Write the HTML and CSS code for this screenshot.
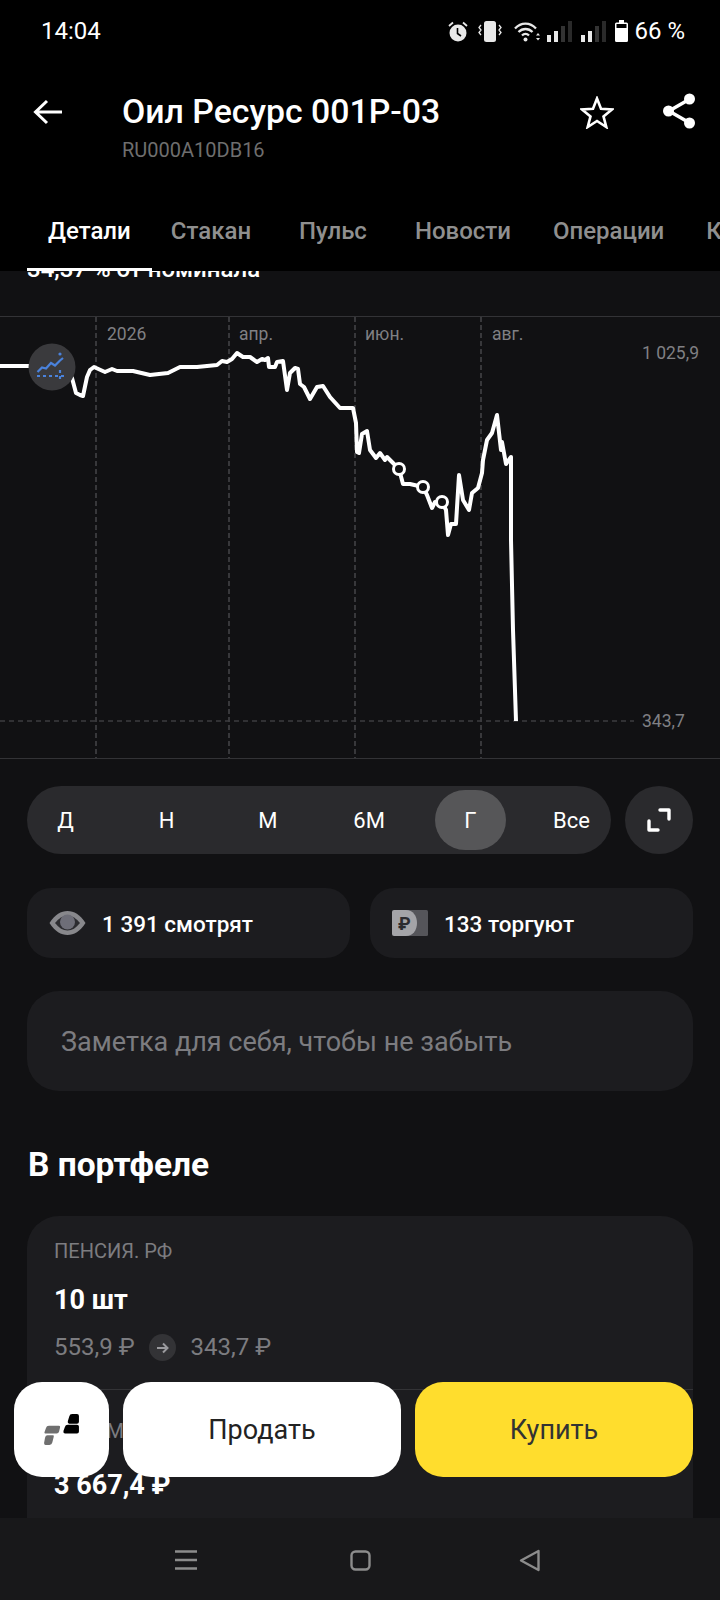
FILE: index.html
```html
<!DOCTYPE html>
<html lang="ru">
<head>
    <meta charset="UTF-8">
    <meta name="viewport" content="width=device-width, initial-scale=1.0">
    <title>Оил Ресурс 001Р-03</title>
    <link rel="stylesheet" href="styles.css">
</head>
<body>
    <div class="screen">
        <header class="top">
            <div class="status-bar">
                <span class="status-time">14:04</span>
                <div class="status-icons">
                    <svg class="ic-alarm" width="20" height="21" viewBox="0 0 20 21"><path d="M1 5 5 1.500M19 5l-4-3.500" stroke="#e8e8e8" stroke-width="1.800"/><circle cx="10" cy="12" r="8.500" fill="#e8e8e8"/><path d="M9.500 7v5.500l3.500 2.500" stroke="#000" stroke-width="1.600" fill="none"/></svg>
                    <svg class="ic-vibrate" width="24" height="21" viewBox="0 0 24 21"><rect x="6" y="0" width="12" height="21" rx="2.500" fill="#e8e8e8"/><path d="M3 4 1 6.500 3 9 1 11.500 3 14M21 4l2 2.500L21 9l2 2.500L21 14" stroke="#e8e8e8" stroke-width="1.300" fill="none"/></svg>
                    <svg class="ic-wifi" width="26" height="21" viewBox="0 0 26 21"><path d="M1 7.500C7 1 16 1 22 7.500M4.500 11c4-4 10-4 14 0M8 14.500c2-2 5-2 7 0" stroke="#e8e8e8" stroke-width="2.300" fill="none"/><circle cx="11.500" cy="18.500" r="2" fill="#e8e8e8"/><path d="M22 14.500h4l-2-2.500zM22 17h4l-2 2.500z" fill="#e8e8e8"/></svg>
                    <svg class="ic-signal" width="25" height="21" viewBox="0 0 25 21"><rect x="0" y="14" width="4" height="7" fill="#e8e8e8"/><rect x="7" y="10" width="4" height="11" fill="#e8e8e8"/><rect x="14" y="5" width="4" height="16" fill="#333"/><rect x="21" y="0" width="4" height="21" fill="#2a2a2a"/></svg>
                    <svg class="ic-signal" width="25" height="21" viewBox="0 0 25 21"><rect x="0" y="14" width="4" height="7" fill="#e8e8e8"/><rect x="7" y="10" width="4" height="11" fill="#e8e8e8"/><rect x="14" y="5" width="4" height="16" fill="#333"/><rect x="21" y="0" width="4" height="21" fill="#2a2a2a"/></svg>
                    <svg class="ic-battery" width="13" height="22" viewBox="0 0 13 22"><path d="M4 0h5v2.500h2.500a1.500 1.500 0 0 1 1.500 1.500v16.500a1.500 1.500 0 0 1-1.500 1.500h-10A1.500 1.500 0 0 1 0 20.500V4a1.500 1.500 0 0 1 1.500-1.500H4z" fill="#fff"/><rect x="1.500" y="4" width="10" height="4" fill="#000"/></svg>
                    <span class="status-pct">66 %</span>
                </div>
            </div>
            <div class="title-row">
                <svg class="back-ic" width="30" height="26" viewBox="0 0 30 26"><path d="M29 13H3M14 2 2.500 13 14 24" stroke="#fff" stroke-width="3" fill="none"/></svg>
                <div class="title-text">
                    <h1>Оил Ресурс 001Р-03</h1>
                    <div class="isin">RU000A10DB16</div>
                </div>
                <svg class="star-ic" width="34" height="33" viewBox="0 0 34 33"><path d="M17 2.500 21 12.800 32 13.400 23.500 20.400 26.300 31 17 25 7.700 31 10.500 20.400 2 13.400 13 12.800Z" stroke="#fff" stroke-width="2.600" fill="none" stroke-linejoin="miter"/></svg>
                <svg class="share-ic" width="34" height="36" viewBox="0 0 34 36"><path d="M27 6.500 7 18l20 11.500" stroke="#fff" stroke-width="3.500" fill="none"/><circle cx="27.500" cy="6" r="5.500" fill="#fff"/><circle cx="6.500" cy="18" r="5.500" fill="#fff"/><circle cx="27.500" cy="30" r="5.500" fill="#fff"/></svg>
            </div>
            <nav class="tabs">
                <a class="tab tab-active">Детали</a>
                <a class="tab">Стакан</a>
                <a class="tab">Пульс</a>
                <a class="tab">Новости</a>
                <a class="tab">Операции</a>
                <a class="tab">Купоны</a>
            </nav>
        </header>

        <main class="content">
            <div class="nominal">34,37 % от номинала</div>

            <svg class="chart" width="720" height="444" viewBox="0 316 720 444">
                <path class="grid" d="M0 316.500H720M0 758.500H720"/>
                <path class="grid-dash" d="M96 317V758M229 317V758M355 317V758M481 317V758"/>
                <path class="level-dash" d="M0 721H634"/>
                <text class="axis" x="107" y="340">2026</text>
                <text class="axis" x="239" y="340">апр.</text>
                <text class="axis" x="365" y="340">июн.</text>
                <text class="axis" x="492" y="340">авг.</text>
                <text class="axis" x="642" y="359">1 025,9</text>
                <text class="axis" x="642" y="727">343,7</text>
                <path class="price" d="M0 366 27 366 40 366 60 366 72 378 76 393 80 395 83 396 87 377 90 370 94 367 105 372 112 369 117 371 133 371 150 375 168 373 180 367 197 367 217 365 222 361 227 362 232 359 237 353 243 357 250 357 257 362 262 359 265 360 268 358 269 367 275 367 277 362 283 361 287 390 290 373 295 368 298 369 300 384 304 387 310 399 317 387 323 386 330 397 340 408 353 408 356 423 357 452 359 453 362 434 367 431 370 450 376 458 380 453 385 460 387 457 393 463 399 469 403 484 410 484 423 487 427 495 432 508 435 502 442 502 446 510 448 535 451 524 456 524 459 475 463 500 469 510 472 493 478 488 482 473 483 460 487 440 492 433 497 415 501 450 502 442 506 464 511 457 511 540 513 630 516 721"/>
                <circle class="marker" cx="399" cy="469" r="5.500"/>
                <circle class="marker" cx="423" cy="487" r="5.500"/>
                <circle class="marker" cx="442" cy="502" r="5.500"/>
                <circle cx="52" cy="367" r="23.500" fill="#3a3a3d"/>
                <path d="M37.500 372 42 367.500 46 368.500 51 363 55 365.500 60 360.500 63 358" stroke="#4a82dc" stroke-width="2.200" fill="none"/>
                <circle cx="60" cy="354" r="1.600" fill="#4a82dc"/>
                <path d="M37 376H66M60 370V382" stroke="#4a82dc" stroke-width="2.200" stroke-dasharray="3 3" fill="none"/>
            </svg>

            <div class="controls">
                <div class="periods">
                    <span class="period">Д</span>
                    <span class="period">Н</span>
                    <span class="period">М</span>
                    <span class="period">6М</span>
                    <span class="period period-active">Г</span>
                    <span class="period">Все</span>
                </div>
                <div class="expand">
                    <svg width="24" height="24" viewBox="0 0 24 24"><path d="M13 2h9v9M2 13v9h9" stroke="#fff" stroke-width="3.400" fill="none" stroke-linecap="round" stroke-linejoin="round"/></svg>
                </div>
            </div>

            <div class="stats">
                <div class="stat">
                    <svg width="37" height="26" viewBox="0 0 37 26"><path d="M.5 13C6 4.500 12 1 18.500 1S31 4.500 36.500 13C31 21.500 25 25 18.500 25S6 21.500.5 13Z" fill="#88888c"/><path d="M6 13c4-5 8-7.500 12.500-7.500S27 8 31 13c-4 5-8 7.500-12.500 7.500S10 18 6 13Z" fill="#2c2c30"/><circle cx="18.500" cy="12" r="7.500" fill="#6e6e78"/></svg>
                    <span class="stat-text">1 391 смотрят</span>
                </div>
                <div class="stat">
                    <svg width="36" height="26" viewBox="0 0 36 26"><rect x="8" y="0" width="28" height="26" rx="1.500" fill="#55555a"/><path d="M2 0H14C21 0 25 6 25 13S21 26 14 26H2A2 2 0 0 1 0 24V2A2 2 0 0 1 2 0Z" fill="#a4a4a8"/><text class="rub-mark" x="6" y="20">₽</text></svg>
                    <span class="stat-text">133 торгуют</span>
                </div>
            </div>

            <div class="note">Заметка для себя, чтобы не забыть</div>

            <h2 class="section-title">В портфеле</h2>

            <section class="card">
                <div class="card-label">ПЕНСИЯ. РФ</div>
                <div class="card-value">10 шт</div>
                <div class="price-row">
                    <span>553,9 ₽</span>
                    <span class="arrow-dot">
                        <svg width="13" height="12" viewBox="0 0 13 12"><path d="M1 6H11M7 1.500 11.500 6 7 10.500" stroke="#9a9a9e" stroke-width="2" fill="none"/></svg>
                    </span>
                    <span>343,7 ₽</span>
                </div>
                <div class="card-line"></div>
                <div class="card-label">СТОИМОСТЬ</div>
                <div class="card-value card-sum">3 667,4 ₽</div>
            </section>
        </main>

        <div class="actions">
            <div class="btn btn-logo">
                <svg width="35" height="31" viewBox="0 0 36 32"><path d="M26 2.500Q26.500 0 29 0h5q2 0 2 2v6q0 2-2 2h-8q-2 0-1.500-2.500z" fill="#000"/><path d="M21.500 13.500q.5-2.500 3-2.500H34q2 0 2 2v5q0 2-2 2H21.500q-2 0-1.500-2.500z" fill="#000"/><path d="M2 14.500q.5-2.500 3-2.500h10.500q1.500 0 1 2l-1 4q-.5 2-2.500 2H1q-1 0-.5-1.500z" fill="#6f6f6f"/><path d="M1 24.500q.5-2.500 2.500-2.500H9q1.500 0 1 1.500l-1.500 6q-.5 2.500-3 2.500H1.500q-1.500 0-1.500-2z" fill="#6f6f6f"/></svg>
            </div>
            <div class="btn btn-sell">Продать</div>
            <div class="btn btn-buy">Купить</div>
        </div>

        <footer class="navbar">
            <svg width="22" height="20" viewBox="0 0 22 20"><path d="M0 1.500H22M0 10H22M0 18.500H22" stroke="#8c8c8c" stroke-width="2.400"/></svg>
            <svg width="21" height="21" viewBox="0 0 21 21"><rect x="1.500" y="1.500" width="18" height="18" rx="4" stroke="#8c8c8c" stroke-width="2.400" fill="none"/></svg>
            <svg class="nav-back" width="22" height="23" viewBox="0 0 22 23"><path d="M19.500 2 2 11.500 19.500 21Z" stroke="#8c8c8c" stroke-width="2.400" fill="none" stroke-linejoin="round"/></svg>
        </footer>
    </div>
</body>
</html>
```

FILE: styles.css
```css
* {
    box-sizing: border-box;
}
body {
    margin: 0;
    background-color: #111113;
    font-family: Roboto, "Noto Sans", sans-serif;
    color: #ffffff;
}
.screen {
    position: relative;
    display: flex;
    flex-direction: column;
    width: 720px;
    height: 1600px;
    overflow: hidden;
}

/* top black area */
.top {
    position: relative;
    z-index: 2;
    flex: none;
    height: 271px;
    background-color: #000000;
    overflow: hidden;
}
.status-bar {
    display: flex;
    justify-content: space-between;
    align-items: center;
    height: 62px;
    padding: 0 35px 0 41px;
}
.status-time,
.status-pct {
    font-size: 24px;
    line-height: 28px;
}
.status-icons {
    display: flex;
    align-items: center;
}
.ic-alarm { margin-right: 10px; }
.ic-vibrate { margin-right: 12px; }
.ic-wifi { margin-right: 7px; }
.ic-signal { margin-right: 9px; }
.ic-battery { margin-right: 6px; }

.title-row {
    display: flex;
    align-items: flex-start;
    height: 94px;
    padding: 30px 24px 0 33px;
}
.back-ic {
    flex: none;
    margin-top: 7px;
}
.title-text {
    flex: 1;
    margin-left: 59px;
}
.title-text h1 {
    margin: 0;
    font-size: 33.800px;
    line-height: 40px;
    font-weight: 500;
}
.isin {
    margin-top: 7px;
    font-size: 20px;
    line-height: 22px;
    color: #6e6e6e;
}
.star-ic {
    flex: none;
    margin: 4px 48px 0 0;
}
.share-ic {
    flex: none;
    margin-top: 1px;
}

.tabs {
    display: flex;
    height: 115px;
    padding-top: 56px;
    white-space: nowrap;
}
.tab {
    position: relative;
    flex: none;
    font-size: 24px;
    line-height: 38px;
    font-weight: 500;
    color: #8f8f8f;
}
.tab:nth-child(1) { margin-left: 48px; }
.tab:nth-child(2) { margin-left: 40px; }
.tab:nth-child(3) { margin-left: 48px; }
.tab:nth-child(4) { margin-left: 48px; }
.tab:nth-child(5) { margin-left: 42px; }
.tab:nth-child(6) { margin-left: 42px; }
.tab-active {
    color: #ffffff;
}
.tab-active::after {
    content: "";
    position: absolute;
    left: -21px;
    right: -21px;
    top: 56px;
    height: 3px;
    background-color: #ffffff;
}

/* scrolled content */
.content {
    flex: 1;
    min-height: 0;
    overflow: hidden;
}
.nominal {
    margin: -15px 0 0 27px;
    height: 60px;
    font-size: 24px;
    line-height: 26px;
    font-weight: 500;
}
.chart {
    display: block;
}
.grid {
    stroke: #333336;
    stroke-width: 1;
    fill: none;
}
.grid-dash {
    stroke: #38383b;
    stroke-width: 2;
    stroke-dasharray: 5 3;
    fill: none;
}
.level-dash {
    stroke: #3d3d40;
    stroke-width: 1.500;
    stroke-dasharray: 5 4;
    fill: none;
}
.axis {
    font-family: Roboto, sans-serif;
    font-size: 17.500px;
    fill: #808084;
}
.price {
    stroke: #ffffff;
    stroke-width: 4;
    stroke-linejoin: round;
    fill: none;
}
.marker {
    stroke: #ffffff;
    stroke-width: 3;
    fill: #111113;
}

.controls {
    display: flex;
    gap: 14px;
    margin: 26px 27px 0;
}
.periods {
    display: flex;
    flex: 1;
    justify-content: space-between;
    align-items: center;
    height: 68px;
    padding: 0 4px 0 3px;
    border-radius: 34px;
    background-color: #2a2a2d;
}
.period {
    display: flex;
    justify-content: center;
    align-items: center;
    width: 71px;
    height: 60px;
    border-radius: 30px;
    font-size: 22px;
}
.period-active {
    background-color: #565658;
}
.expand {
    display: flex;
    flex: none;
    justify-content: center;
    align-items: center;
    width: 68px;
    height: 68px;
    border-radius: 50%;
    background-color: #2a2a2d;
}

.stats {
    display: flex;
    gap: 20px;
    margin: 34px 27px 0;
}
.stat {
    display: flex;
    flex: 1;
    align-items: center;
    gap: 16px;
    height: 70px;
    padding: 0 22px;
    border-radius: 24px;
    background-color: #1c1c1f;
    font-size: 22.500px;
    font-weight: 500;
}
.stat-text {
    padding-top: 2px;
}
.rub-mark {
    font-family: Roboto, sans-serif;
    font-size: 18px;
    font-weight: 700;
    fill: #2c2c30;
}

.note {
    display: flex;
    align-items: center;
    height: 100px;
    margin: 33px 27px 0;
    padding: 2px 0 0 34px;
    border-radius: 32px;
    background-color: #1c1c1f;
    font-size: 27px;
    color: #7c7c80;
}

.section-title {
    margin: 56px 0 0 28px;
    font-size: 33.500px;
    line-height: 36px;
    font-weight: 700;
}

.card {
    margin: 33px 27px 0;
    padding: 24px 27px 0;
    height: 400px;
    border-radius: 32px;
    background-color: #1c1c1f;
}
.card-label {
    font-size: 20px;
    line-height: 22px;
    color: #7c7c80;
}
.card-value {
    margin-top: 24px;
    font-size: 27px;
    line-height: 28px;
    font-weight: 700;
}
.card-sum {
    margin-top: 29px;
}
.price-row {
    display: flex;
    align-items: center;
    gap: 14px;
    margin-top: 20px;
    font-size: 24px;
    line-height: 27px;
    color: #7c7c80;
}
.arrow-dot {
    display: flex;
    justify-content: center;
    align-items: center;
    width: 27px;
    height: 27px;
    margin-right: 1px;
    border-radius: 50%;
    background-color: #333336;
}
.card-line {
    height: 1px;
    margin: 28px -27px 30px 0;
    background-color: #333336;
}

/* buttons float over the card */
.actions {
    position: absolute;
    left: 14px;
    right: 27px;
    top: 1382px;
    z-index: 3;
    display: flex;
    gap: 14px;
}
.btn {
    display: flex;
    justify-content: center;
    align-items: center;
    height: 95px;
    border-radius: 28px;
    font-size: 27px;
    color: #333333;
}
.btn-logo {
    flex: none;
    width: 95px;
    background-color: #ffffff;
}
.btn-sell {
    flex: 1;
    background-color: #ffffff;
    color: #222222;
}
.btn-buy {
    flex: 1;
    background-color: #ffdd2d;
}

.navbar {
    position: relative;
    z-index: 2;
    display: flex;
    flex: none;
    align-items: center;
    gap: 153px;
    height: 82px;
    padding: 2px 0 0 175px;
    background-color: #18181a;
}
.nav-back {
    margin-left: -5px;
}
```
